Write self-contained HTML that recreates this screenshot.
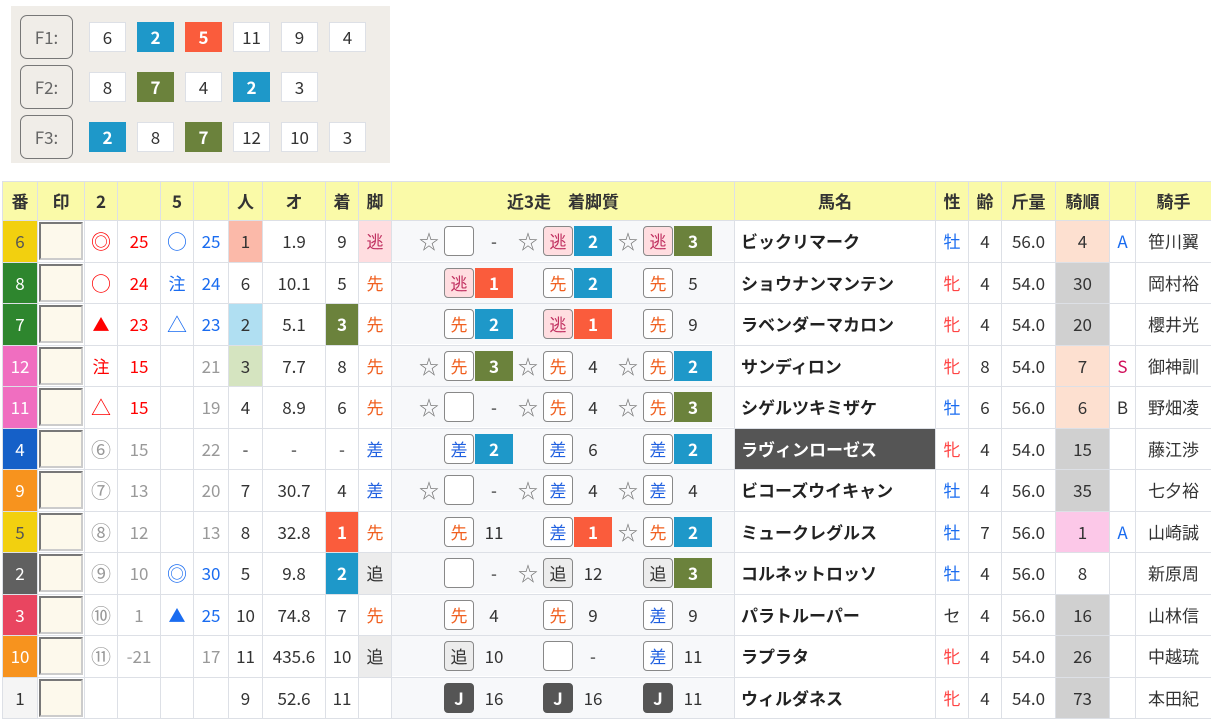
<!DOCTYPE html>
<html><head><meta charset="utf-8"><style>
body{margin:0;background:#fff;width:1211px;height:718px;overflow:hidden;font-family:"Noto Sans CJK JP","Liberation Sans",sans-serif;color:#333;position:relative}
.panel{position:absolute;left:11px;top:6px;width:379px;height:157px;background:#f0ede8}
.fb{position:absolute;left:9px;width:51px;height:42px;border:1px solid #777;border-radius:7px;color:#666;font-size:17px;line-height:42px;text-align:center}
.nb{position:absolute;width:35px;height:28px;border:1px solid #dde0e6;background:#fff;text-align:center;line-height:28px;font-size:17px;color:#333}
.nb.b{background:#1e98c9;color:#fff;font-weight:bold;border-color:#1e98c9}
.nb.r{background:#fa5c3c;color:#fff;font-weight:bold;border-color:#fa5c3c}
.nb.g{background:#6b823c;color:#fff;font-weight:bold;border-color:#6b823c}
table{position:absolute;left:2px;top:181px;border-collapse:collapse;table-layout:fixed;width:1209px;font-size:17px;line-height:20px}
td,th{border:1px solid #dde0e6;padding:0;text-align:center;white-space:nowrap;overflow:hidden}
th{background:#fafaa8;height:38px;font-weight:bold;color:#333}
tr.d{height:41.5px}
td{height:40px}
.no{color:#fff}
.in{display:block;margin:0 1px;height:34px;background:#fdf9ec;border:2px inset #ccc}
.red{color:#f00}.blu{color:#1a6cf0}.gr{color:#999}
.mk{font-size:20px}
.rc{position:relative;height:40px;background:#f7f8fa}
.rc span{position:absolute;top:5px;height:30px;line-height:30px;text-align:center}
.st{width:24px;color:#777;font-size:20px}
.bx{width:28px;border:1px solid #888;border-radius:4px;background:#fff;height:28px!important;line-height:28px!important}
.nige{background:#ffdde0!important;color:#c03060}.saki{color:#f06020}.sa{color:#2060e0}.oi{background:#ececec!important;color:#333}
.J{background:#555!important;color:#fff;font-weight:bold;border-color:#555!important}
.res{width:38px}
.cb{background:#1e98c9;color:#fff;font-weight:bold}.cr{background:#fa5c3c;color:#fff;font-weight:bold}.cg{background:#6b823c;color:#fff;font-weight:bold}
.nm{text-align:left;padding-left:6px;font-weight:bold;color:#222}
</style></head><body>
<div class="panel">
<div class="fb" style="top:9px">F1:</div><div class="fb" style="top:59px">F2:</div><div class="fb" style="top:109px">F3:</div>
<div class="nb" style="left:78px;top:16px">6</div><div class="nb b" style="left:126px;top:16px">2</div><div class="nb r" style="left:174px;top:16px">5</div><div class="nb" style="left:222px;top:16px">11</div><div class="nb" style="left:270px;top:16px">9</div><div class="nb" style="left:318px;top:16px">4</div>
<div class="nb" style="left:78px;top:66px">8</div><div class="nb g" style="left:126px;top:66px">7</div><div class="nb" style="left:174px;top:66px">4</div><div class="nb b" style="left:222px;top:66px">2</div><div class="nb" style="left:270px;top:66px">3</div>
<div class="nb b" style="left:78px;top:116px">2</div><div class="nb" style="left:126px;top:116px">8</div><div class="nb g" style="left:174px;top:116px">7</div><div class="nb" style="left:222px;top:116px">12</div><div class="nb" style="left:270px;top:116px">10</div><div class="nb" style="left:318px;top:116px">3</div>
</div>
<table>
<colgroup><col style="width:35px"><col style="width:47px"><col style="width:33px"><col style="width:43px"><col style="width:33px"><col style="width:35px"><col style="width:34px"><col style="width:63px"><col style="width:33px"><col style="width:33px"><col style="width:343px"><col style="width:201px"><col style="width:33px"><col style="width:33px"><col style="width:54px"><col style="width:54px"><col style="width:26px"><col style="width:76px"></colgroup>
<tr><th>番</th><th>印</th><th>2</th><th></th><th>5</th><th></th><th>人</th><th>オ</th><th>着</th><th>脚</th><th>近3走　着脚質</th><th>馬名</th><th>性</th><th>齢</th><th>斤量</th><th>騎順</th><th></th><th>騎手</th></tr>

<tr class="d"><td style="background:#f2d00f;color:#555">6</td><td><span class="in"></span></td><td class="red mk">◎</td><td class="red">25</td><td class="blu mk">○</td><td class="blu">25</td><td style="background:#fbb9a9">1</td><td>1.9</td><td>9</td><td class="nige">逃</td>
<td><div class="rc"><span class="st" style="left:25px">☆</span><span class="bx" style="left:52px"></span><span class="res" style="left:83px">-</span><span class="st" style="left:124px">☆</span><span class="bx nige" style="left:151px">逃</span><span class="res cb" style="left:182px">2</span><span class="st" style="left:224px">☆</span><span class="bx nige" style="left:251px">逃</span><span class="res cg" style="left:282px">3</span></div></td>
<td class="nm">ビックリマーク</td><td class="blu">牡</td><td>4</td><td>56.0</td><td style="background:#fde0d0">4</td><td class="blu">A</td><td>笹川翼</td></tr>

<tr class="d"><td class="no" style="background:#2e862e">8</td><td><span class="in"></span></td><td class="red mk">○</td><td class="red">24</td><td class="blu">注</td><td class="blu">24</td><td>6</td><td>10.1</td><td>5</td><td class="saki">先</td>
<td><div class="rc"><span class="bx nige" style="left:52px">逃</span><span class="res cr" style="left:83px">1</span><span class="bx saki" style="left:151px">先</span><span class="res cb" style="left:182px">2</span><span class="bx saki" style="left:251px">先</span><span class="res" style="left:282px">5</span></div></td>
<td class="nm">ショウナンマンテン</td><td style="color:#f44">牝</td><td>4</td><td>54.0</td><td style="background:#d0d0d0">30</td><td></td><td>岡村裕</td></tr>

<tr class="d"><td class="no" style="background:#2e862e">7</td><td><span class="in"></span></td><td class="red">▲</td><td class="red">23</td><td class="blu mk">△</td><td class="blu">23</td><td style="background:#b0dff2">2</td><td>5.1</td><td class="cg">3</td><td class="saki">先</td>
<td><div class="rc"><span class="bx saki" style="left:52px">先</span><span class="res cb" style="left:83px">2</span><span class="bx nige" style="left:151px">逃</span><span class="res cr" style="left:182px">1</span><span class="bx saki" style="left:251px">先</span><span class="res" style="left:282px">9</span></div></td>
<td class="nm">ラベンダーマカロン</td><td style="color:#f44">牝</td><td>4</td><td>54.0</td><td style="background:#d0d0d0">20</td><td></td><td>櫻井光</td></tr>

<tr class="d"><td class="no" style="background:#f06ec0">12</td><td><span class="in"></span></td><td class="red">注</td><td class="red">15</td><td></td><td class="gr">21</td><td style="background:#d5e4c0">3</td><td>7.7</td><td>8</td><td class="saki">先</td>
<td><div class="rc"><span class="st" style="left:25px">☆</span><span class="bx saki" style="left:52px">先</span><span class="res cg" style="left:83px">3</span><span class="st" style="left:124px">☆</span><span class="bx saki" style="left:151px">先</span><span class="res" style="left:182px">4</span><span class="st" style="left:224px">☆</span><span class="bx saki" style="left:251px">先</span><span class="res cb" style="left:282px">2</span></div></td>
<td class="nm">サンディロン</td><td style="color:#f44">牝</td><td>8</td><td>54.0</td><td style="background:#fde0d0">7</td><td style="color:#d0105a">S</td><td>御神訓</td></tr>

<tr class="d"><td class="no" style="background:#f06ec0">11</td><td><span class="in"></span></td><td class="red mk">△</td><td class="red">15</td><td></td><td class="gr">19</td><td>4</td><td>8.9</td><td>6</td><td class="saki">先</td>
<td><div class="rc"><span class="st" style="left:25px">☆</span><span class="bx" style="left:52px"></span><span class="res" style="left:83px">-</span><span class="st" style="left:124px">☆</span><span class="bx saki" style="left:151px">先</span><span class="res" style="left:182px">4</span><span class="st" style="left:224px">☆</span><span class="bx saki" style="left:251px">先</span><span class="res cg" style="left:282px">3</span></div></td>
<td class="nm">シゲルツキミザケ</td><td class="blu">牡</td><td>6</td><td>56.0</td><td style="background:#fde0d0">6</td><td>B</td><td>野畑凌</td></tr>

<tr class="d"><td class="no" style="background:#1560c8">4</td><td><span class="in"></span></td><td class="gr mk">⑥</td><td class="gr">15</td><td></td><td class="gr">22</td><td>-</td><td>-</td><td>-</td><td class="sa">差</td>
<td><div class="rc"><span class="bx sa" style="left:52px">差</span><span class="res cb" style="left:83px">2</span><span class="bx sa" style="left:151px">差</span><span class="res" style="left:182px">6</span><span class="bx sa" style="left:251px">差</span><span class="res cb" style="left:282px">2</span></div></td>
<td class="nm" style="background:#555;color:#fff">ラヴィンローゼス</td><td style="color:#f44">牝</td><td>4</td><td>54.0</td><td style="background:#d0d0d0">15</td><td></td><td>藤江渉</td></tr>

<tr class="d"><td class="no" style="background:#f7931e">9</td><td><span class="in"></span></td><td class="gr mk">⑦</td><td class="gr">13</td><td></td><td class="gr">20</td><td>7</td><td>30.7</td><td>4</td><td class="sa">差</td>
<td><div class="rc"><span class="st" style="left:25px">☆</span><span class="bx" style="left:52px"></span><span class="res" style="left:83px">-</span><span class="st" style="left:124px">☆</span><span class="bx sa" style="left:151px">差</span><span class="res" style="left:182px">4</span><span class="st" style="left:224px">☆</span><span class="bx sa" style="left:251px">差</span><span class="res" style="left:282px">4</span></div></td>
<td class="nm">ビコーズウイキャン</td><td class="blu">牡</td><td>4</td><td>56.0</td><td style="background:#d0d0d0">35</td><td></td><td>七夕裕</td></tr>

<tr class="d"><td style="background:#f2d00f;color:#555">5</td><td><span class="in"></span></td><td class="gr mk">⑧</td><td class="gr">12</td><td></td><td class="gr">13</td><td>8</td><td>32.8</td><td class="cr">1</td><td class="saki">先</td>
<td><div class="rc"><span class="bx saki" style="left:52px">先</span><span class="res" style="left:83px">11</span><span class="bx sa" style="left:151px">差</span><span class="res cr" style="left:182px">1</span><span class="st" style="left:224px">☆</span><span class="bx saki" style="left:251px">先</span><span class="res cb" style="left:282px">2</span></div></td>
<td class="nm">ミュークレグルス</td><td class="blu">牡</td><td>7</td><td>56.0</td><td style="background:#fcc8e8">1</td><td class="blu">A</td><td>山崎誠</td></tr>

<tr class="d"><td class="no" style="background:#606060">2</td><td><span class="in"></span></td><td class="gr mk">⑨</td><td class="gr">10</td><td class="blu mk">◎</td><td class="blu">30</td><td>5</td><td>9.8</td><td class="cb">2</td><td class="oi">追</td>
<td><div class="rc"><span class="bx" style="left:52px"></span><span class="res" style="left:83px">-</span><span class="st" style="left:124px">☆</span><span class="bx oi" style="left:151px">追</span><span class="res" style="left:182px">12</span><span class="bx oi" style="left:251px">追</span><span class="res cg" style="left:282px">3</span></div></td>
<td class="nm">コルネットロッソ</td><td class="blu">牡</td><td>4</td><td>56.0</td><td>8</td><td></td><td>新原周</td></tr>

<tr class="d"><td class="no" style="background:#e94560">3</td><td><span class="in"></span></td><td class="gr mk">⑩</td><td class="gr">1</td><td class="blu">▲</td><td class="blu">25</td><td>10</td><td>74.8</td><td>7</td><td class="saki">先</td>
<td><div class="rc"><span class="bx saki" style="left:52px">先</span><span class="res" style="left:83px">4</span><span class="bx saki" style="left:151px">先</span><span class="res" style="left:182px">9</span><span class="bx sa" style="left:251px">差</span><span class="res" style="left:282px">9</span></div></td>
<td class="nm">パラトルーパー</td><td>セ</td><td>4</td><td>56.0</td><td style="background:#d0d0d0">16</td><td></td><td>山林信</td></tr>

<tr class="d"><td class="no" style="background:#f7931e">10</td><td><span class="in"></span></td><td class="gr mk">⑪</td><td class="gr">-21</td><td></td><td class="gr">17</td><td>11</td><td>435.6</td><td>10</td><td class="oi">追</td>
<td><div class="rc"><span class="bx oi" style="left:52px">追</span><span class="res" style="left:83px">10</span><span class="bx" style="left:151px"></span><span class="res" style="left:182px">-</span><span class="bx sa" style="left:251px">差</span><span class="res" style="left:282px">11</span></div></td>
<td class="nm">ラプラタ</td><td style="color:#f44">牝</td><td>4</td><td>54.0</td><td style="background:#d0d0d0">26</td><td></td><td>中越琉</td></tr>

<tr class="d"><td style="background:#f5f5f5">1</td><td><span class="in"></span></td><td></td><td></td><td></td><td></td><td>9</td><td>52.6</td><td>11</td><td></td>
<td><div class="rc"><span class="bx J" style="left:52px">J</span><span class="res" style="left:83px">16</span><span class="bx J" style="left:151px">J</span><span class="res" style="left:182px">16</span><span class="bx J" style="left:251px">J</span><span class="res" style="left:282px">11</span></div></td>
<td class="nm">ウィルダネス</td><td style="color:#f44">牝</td><td>4</td><td>54.0</td><td style="background:#d0d0d0">73</td><td></td><td>本田紀</td></tr>
</table>
</body></html>
